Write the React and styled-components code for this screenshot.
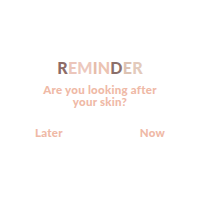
import React from 'react';
import styled, { createGlobalStyle } from 'styled-components';

const Global = createGlobalStyle`
  html, body { margin: 0; padding: 0; background: #fff; }
  body { font-family: Lato, "Open Sans", sans-serif; }
`;

const Card = styled.div`
  width: 200px;
  height: 200px;
  box-sizing: border-box;
  padding-top: 58px;
  display: flex;
  flex-direction: column;
  align-items: center;
  background: #fff;
`;

const Title = styled.h1`
  margin: 0;
  font-size: 16px;
  line-height: 20px;
  font-weight: 900;
  letter-spacing: 0.2px;
`;

const Letter = styled.span`
  color: ${p => p.$color};
`;

const Question = styled.p`
  margin: 6px 0 0;
  font-size: 11.5px;
  line-height: 12px;
  font-weight: 900;
  letter-spacing: 0.25px;
  color: #efb9a6;
  text-align: center;
  white-space: nowrap;
`;

const Actions = styled.div`
  align-self: stretch;
  display: flex;
  justify-content: space-between;
  padding: 0 35px;
  margin-top: 18px;
`;

const Action = styled.button`
  border: 0;
  background: none;
  padding: 0;
  font-family: inherit;
  font-size: 11.5px;
  font-weight: 900;
  letter-spacing: 0.25px;
  color: #efb9a6;
  cursor: pointer;
`;

const letters = [
  ['R', '#8c6b67'],
  ['E', '#ecc6bb'],
  ['M', '#ecc8bd'],
  ['I', '#e6bca9'],
  ['N', '#ecc3b2'],
  ['D', '#8b6f6a'],
  ['E', '#dcc2b2'],
  ['R', '#e3cabb'],
];

export default function App() {
  return (
    <>
      <Global />
      <Card>
        <Title>
          {letters.map(([ch, c], i) => (
            <Letter key={i} $color={c}>{ch}</Letter>
          ))}
        </Title>
        <Question>
          Are you looking after<br />your skin?
        </Question>
        <Actions>
          <Action>Later</Action>
          <Action>Now</Action>
        </Actions>
      </Card>
    </>
  );
}
